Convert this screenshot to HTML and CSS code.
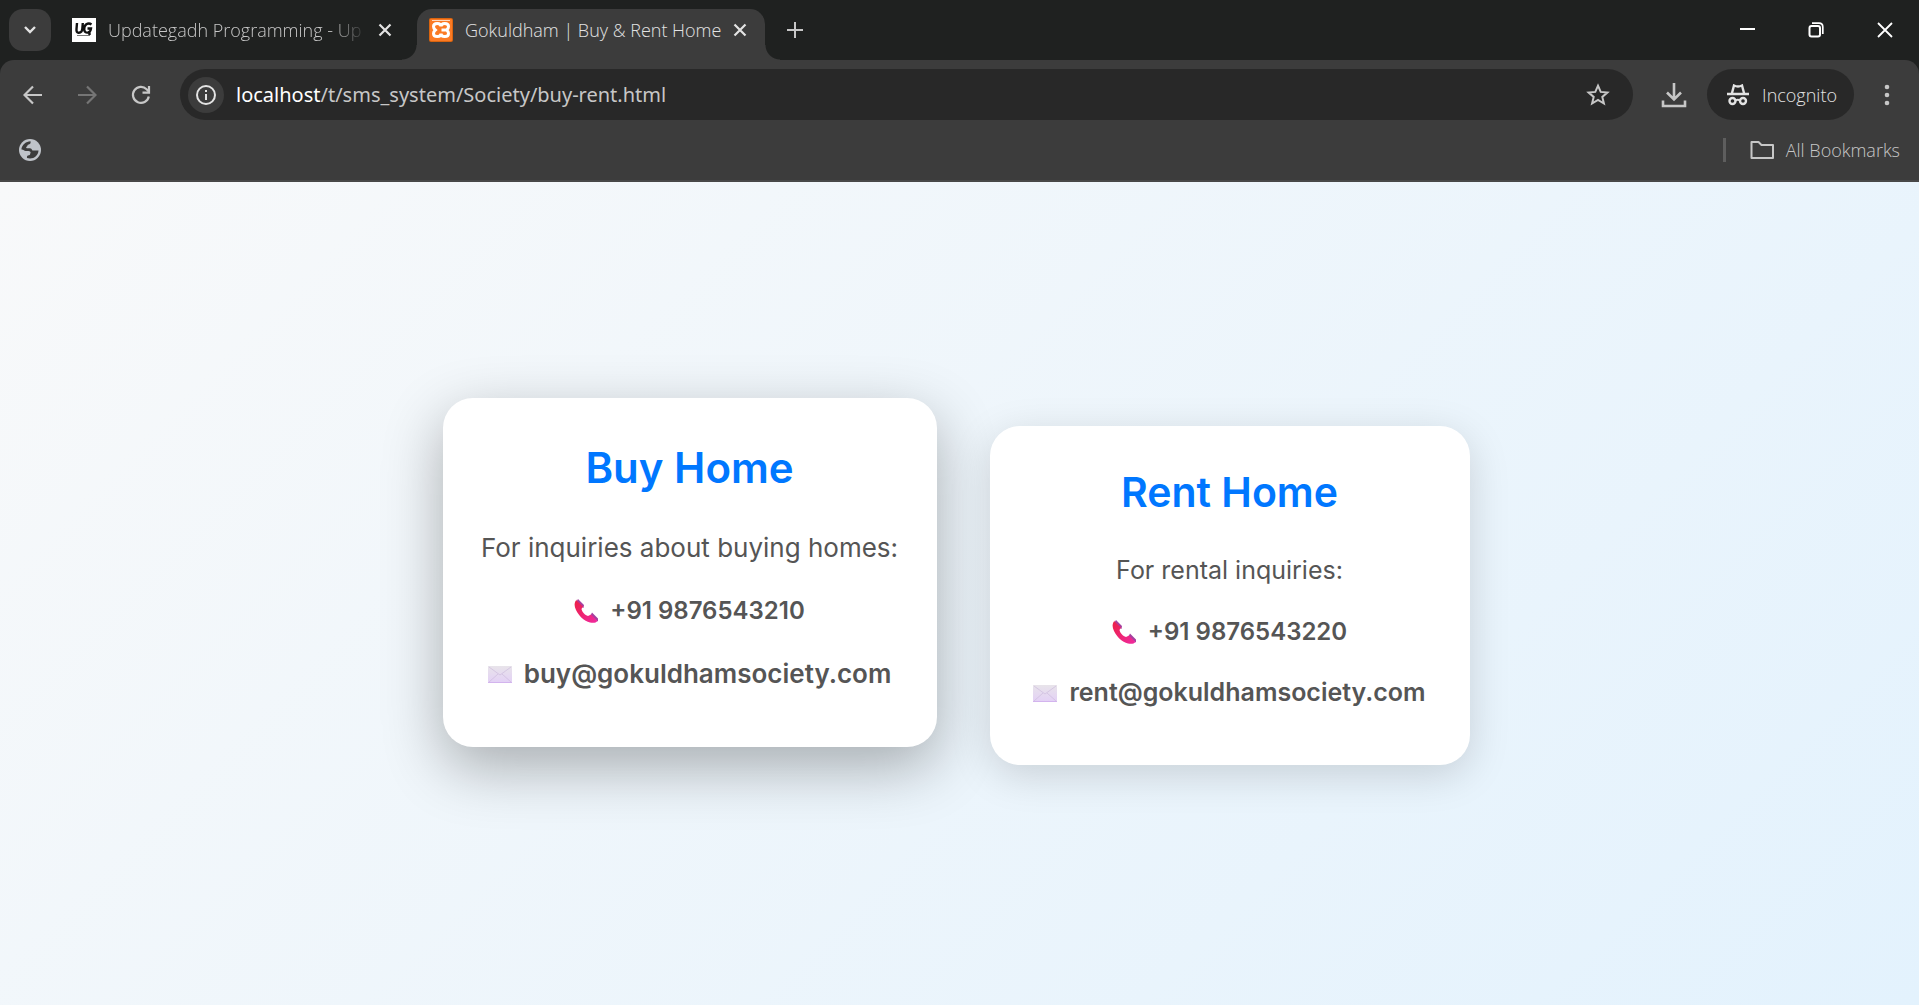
FILE: index.html
```html
<!DOCTYPE html>
<html lang="en">
<head>
<meta charset="utf-8">
<title>Gokuldham | Buy &amp; Rent Home</title>
<link rel="stylesheet" href="styles.css">
</head>
<body>
<header class="browser">
  <div class="tabstrip">
    <button class="tab-search" aria-label="Search tabs"><svg width="14" height="10" viewBox="0 0 14 10"><path d="M2 2l5 5 5-5" fill="none" stroke="currentColor" stroke-width="2.4"/></svg></button>
    <div class="tab">
      <svg class="favicon" width="24" height="24" viewBox="0 0 24 24"><path fill="#fff" d="M0 0h24v24H0z"/><path d="M5 5L4.500 11q-.4 4 2.400 3.700Q10 14.500 10.300 11L10.800 5M19.500 6.500Q17 4.700 14.300 6.300 12 8 12.200 11.500q.5 3.800 4 3 2.500-.7 2.800-4h-3.500M17.500 14.500v2.500" fill="none" stroke="#111" stroke-width="2.400"/><path d="M5 17.500h13" stroke="#777"/></svg>
      <span class="tab-title tab-title-faded">Updategadh Programming - Up</span>
      <button class="icon-button" aria-label="Close tab"><svg width="14" height="14" viewBox="0 0 14 14"><path d="M1.500 1.500l11 11M12.500 1.500l-11 11" stroke="currentColor" stroke-width="2.200"/></svg></button>
    </div>
    <div class="tab tab-active">
      <svg class="favicon" width="24" height="24" viewBox="0 0 24 24"><rect width="24" height="24" rx="2" fill="#d9640f"/><rect x="1" y="1" width="22" height="22" rx="1" fill="#fb7a24"/><path d="M3 2.500h18" stroke="#ffd9bd"/><path d="M12 8.500C12 4.500 4.500 4.500 4.500 8.500c0 2 1 2.500 2 3.500-1 1-2 1.500-2 3.500 0 4 7.500 4 7.500 0 0 4 7.500 4 7.500 0 0-2-1-2.500-2-3.500 1-1 2-1.500 2-3.500 0-4-7.500-4-7.500 0zM12.500 12H17" fill="none" stroke="#fff" stroke-width="3"/></svg>
      <span class="tab-title">Gokuldham | Buy &amp; Rent Home</span>
      <button class="icon-button" aria-label="Close tab"><svg width="14" height="14" viewBox="0 0 14 14"><path d="M1.500 1.500l11 11M12.500 1.500l-11 11" stroke="currentColor" stroke-width="2.200"/></svg></button>
    </div>
    <button class="icon-button new-tab" aria-label="New tab"><svg width="16" height="16" viewBox="0 0 16 16"><path d="M8 0v16M0 8h16" stroke="currentColor" stroke-width="2"/></svg></button>
    <div class="window-controls">
      <button class="icon-button" aria-label="Minimize"><svg width="16" height="16" viewBox="0 0 16 16"><path d="M1 7h15" stroke="currentColor" stroke-width="2"/></svg></button>
      <button class="icon-button" aria-label="Restore"><svg width="16" height="16" viewBox="0 0 16 16"><rect x="1.500" y="4" width="10.500" height="10.500" rx="2" fill="none" stroke="currentColor" stroke-width="2"/><path d="M4 1.200h7q3.800 0 3.800 3.800v7" fill="none" stroke="currentColor" stroke-width="1.700"/></svg></button>
      <button class="icon-button" aria-label="Close"><svg width="16" height="16" viewBox="0 0 16 16"><path d="M1 1l14 14M15 1L1 15" stroke="currentColor" stroke-width="1.800"/></svg></button>
    </div>
  </div>
  <div class="toolbar">
    <nav class="nav-buttons" aria-label="History">
      <button class="icon-button" aria-label="Back"><svg width="20" height="20" viewBox="0 0 20 20"><path d="M19 10H2M10 1.500L1.500 10l8.500 8.500" fill="none" stroke="currentColor" stroke-width="2.200"/></svg></button>
      <button class="icon-button" aria-label="Forward" disabled><svg width="20" height="20" viewBox="0 0 20 20"><path d="M1 10h17M10 1.500l8.500 8.500-8.500 8.500" fill="none" stroke="currentColor" stroke-width="2.200"/></svg></button>
      <button class="icon-button" aria-label="Reload"><svg width="20" height="20" viewBox="0 0 20 20"><path d="M17.800 11.500A8 8 0 1 1 15.600 4.200L18 6.600" fill="none" stroke="currentColor" stroke-width="2.200"/><path d="M18 1v6.700h-6.500" fill="none" stroke="currentColor" stroke-width="2.200"/></svg></button>
    </nav>
    <div class="omnibox">
      <button class="site-info" aria-label="Site information"><svg width="20" height="20" viewBox="0 0 20 20"><circle cx="10" cy="10" r="9" fill="none" stroke="currentColor" stroke-width="2"/><path d="M10 9v6M10 5v2" stroke="currentColor" stroke-width="2"/></svg></button>
      <p class="url"><span class="url-host">localhost</span>/t/sms_system/Society/buy-rent.html</p>
      <button class="icon-button" aria-label="Bookmark this page"><svg width="24" height="24" viewBox="0 0 24 24"><path d="M12 2.700l2.700 6.200 6.700.6-5.100 4.400 1.600 6.600-5.900-3.500-5.900 3.500 1.600-6.600-5.100-4.400 6.700-.6z" fill="none" stroke="currentColor" stroke-width="2"/></svg></button>
    </div>
    <button class="icon-button" aria-label="Downloads"><svg width="26" height="26" viewBox="0 0 26 26"><path d="M13 1v16M6 10.500l7 7 7-7M2 18.500V24h22v-5.500" fill="none" stroke="currentColor" stroke-width="2.600"/></svg></button>
    <button class="incognito"><svg width="22" height="22" viewBox="0 0 22 22"><path d="M0 10h22M5 9L7 1.500q4 2 8 0L17 9" fill="none" stroke="currentColor" stroke-width="2.400"/><circle cx="5.500" cy="17" r="3" fill="none" stroke="currentColor" stroke-width="2.400"/><circle cx="16" cy="17" r="3" fill="none" stroke="currentColor" stroke-width="2.400"/><path d="M8.500 16.500q2.300-1.500 4.500 0" fill="none" stroke="currentColor" stroke-width="1.800"/></svg>Incognito</button>
    <button class="icon-button menu" aria-label="Menu"><svg width="6" height="22" viewBox="0 0 6 22"><g fill="currentColor"><circle cx="3" cy="3" r="2.300"/><circle cx="3" cy="11" r="2.300"/><circle cx="3" cy="19" r="2.300"/></g></svg></button>
  </div>
  <div class="bookmarks">
    <button class="icon-button" aria-label="Bookmark"><svg width="22" height="22" viewBox="0 0 22 22"><circle cx="11" cy="11" r="11" fill="#bfc3c9"/><path d="M2.500 9.500C3.500 5.500 7 2.500 11.500 2.300c.5 1.700-.3 3-1.700 3.200-1.800.2-1 1.700-2.300 2.300-.7.400-.5 1.400.5 1.500 2 .1 4.500-.3 5 1.500.4 1.200 2 .7 3.500.7h3c-.2 4.500-4 8-8.500 8-1 0-2-.2-3-.5-.3-1.500.3-2.500 2-2.700 1.500-.1.800-1.500 1.500-2.300.6-.8-.6-2-2-2h-3c-1.500 0-1.500-1.500-4-1.500z" fill="#3c3c3c"/></svg></button>
    <button class="all-bookmarks"><svg width="24" height="20" viewBox="0 0 24 20"><path d="M1.500 2h7l3 3H23v13H1.500z" fill="none" stroke="currentColor" stroke-width="2" stroke-linejoin="round"/></svg>All Bookmarks</button>
  </div>
</header>

<svg class="defs" width="0" height="0" aria-hidden="true">
  <defs>
    <linearGradient id="receiver" x1="0" y1="0" x2="1" y2="1"><stop offset="0" stop-color="#ec1f45"/><stop offset="1" stop-color="#f02aa0"/></linearGradient>
    <linearGradient id="paper" x1="0" y1="0" x2="0" y2="1"><stop offset="0" stop-color="#e8e4ea"/><stop offset="1" stop-color="#e3d0f6"/></linearGradient>
    <symbol id="phone" viewBox="0 0 24 24"><path d="M4 0l6 6-.5 3-4-2-4-3zM18 13.500l6 6v3l-8-5z" fill="#a63f9f"/><path d="M3 .5C0 3 0 7 2 11c3 6 8 11 14 12.500 3 .7 6 .5 7.500-1.500L17 15.500l-3 1.500C11 16 8 13 7.500 10L9 7.500 2.500 1.500z" fill="url(#receiver)"/></symbol>
    <symbol id="mail" viewBox="0 0 24 24"><path d="M0 4h24v17H0z" fill="url(#paper)"/><path d="M0 20.500h24" stroke="#d3b4ee"/><path d="M1 5l11 8L23 5M1 20l9-8M23 20l-9-8" fill="none" stroke="#cdbbdc" stroke-width=".7"/></symbol>
  </defs>
</svg>

<main class="page">
  <section class="card card-raised">
    <h2>Buy Home</h2>
    <p>For inquiries about buying homes:</p>
    <p class="contact"><svg><use href="#phone"/></svg><strong class="number">+91 9876543210</strong></p>
    <p class="contact"><svg><use href="#mail"/></svg><strong>buy@gokuldhamsociety.com</strong></p>
  </section>
  <section class="card">
    <h2>Rent Home</h2>
    <p>For rental inquiries:</p>
    <p class="contact"><svg><use href="#phone"/></svg><strong class="number">+91 9876543220</strong></p>
    <p class="contact"><svg><use href="#mail"/></svg><strong>rent@gokuldhamsociety.com</strong></p>
  </section>
</main>
</body>
</html>
```

FILE: styles.css
```css
* { box-sizing: border-box; }

body {
  margin: 0;
  min-height: 100vh;
  display: flex;
  flex-direction: column;
  font-family: Inter, "Open Sans", sans-serif;
}

p, h2 { margin: 0; }

button {
  border: 0;
  padding: 0;
  background: none;
  color: inherit;
  font: inherit;
}

svg { display: block; flex: none; }
.defs { position: absolute; }

/* Browser window */
.browser {
  background: #1f2120;
  color: #c7c7c7;
  font-family: "Open Sans", "Noto Sans", sans-serif;
  font-size: 18px;
  font-weight: 300;
}

.tabstrip {
  display: flex;
  align-items: flex-end;
  height: 60px;
  padding-left: 9px;
}

.tab-search {
  display: grid;
  place-items: center;
  width: 42px;
  height: 42px;
  margin-bottom: 9px;
  border-radius: 14px;
  background: #3c3c3c;
  color: #e3e3e3;
}

.tab {
  display: flex;
  align-items: center;
  width: 366px;
  height: 51px;
  padding: 0 22px 9px 21px;
}

.tab-active {
  position: relative;
  width: 348px;
  padding: 0 15px 9px 12px;
  border-radius: 15px 15px 0 0;
  background: #3c3c3c;
  color: #e3e3e3;
}

/* Flared feet of the active tab */
.tab-active::before,
.tab-active::after {
  content: "";
  position: absolute;
  bottom: 0;
  width: 15px;
  height: 15px;
}
.tab-active::before { right: 100%; background: radial-gradient(circle at 0 0, transparent 14px, #3c3c3c 15px); }
.tab-active::after { left: 100%; background: radial-gradient(circle at 100% 0, transparent 14px, #3c3c3c 15px); }

.tab-title {
  flex: 1;
  margin: 0 8px 0 12px;
  white-space: nowrap;
}
.tab-title-faded {
  -webkit-mask-image: linear-gradient(to left, transparent, #000 36px);
  mask-image: linear-gradient(to left, transparent, #000 36px);
}

.icon-button { display: grid; place-items: center; }
.icon-button:disabled { color: #757575; }
.tab .icon-button { width: 20px; color: #e3e3e3; }

.new-tab { width: 60px; height: 60px; }

.window-controls {
  display: grid;
  grid-template-columns: repeat(3, 69px);
  height: 60px;
  margin-left: auto;
  color: #fff;
}

.toolbar {
  display: flex;
  align-items: center;
  padding: 9px 0 0 23px;
  border-radius: 14px 14px 0 0;
  background: #3c3c3c;
}

.nav-buttons { display: flex; gap: 34px; margin-right: 29px; }

.omnibox {
  flex: 1;
  display: flex;
  align-items: center;
  height: 51px;
  margin-right: 28px;
  padding: 0 23px 0 8px;
  border-radius: 26px;
  background: #282828;
}

.site-info {
  display: grid;
  place-items: center;
  width: 36px;
  height: 36px;
  border-radius: 50%;
  background: #3c3c3c;
  color: #e3e3e3;
}

.url {
  flex: 1;
  margin-left: 12px;
  font-family: "Noto Sans", sans-serif;
  font-size: 20px;
  font-weight: 400;
}
.url-host { color: #fff; }

.incognito {
  display: flex;
  align-items: center;
  gap: 13px;
  height: 51px;
  margin-left: 20px;
  padding: 0 17px 0 20px;
  border-radius: 26px;
  background: #282828;
  color: #e3e3e3;
}

.menu { width: 65px; }

.bookmarks {
  display: flex;
  align-items: center;
  justify-content: space-between;
  height: 62px;
  padding: 0 19px;
  border-bottom: 2px solid #484848;
  background: #3c3c3c;
}

.all-bookmarks {
  display: flex;
  align-items: center;
  gap: 12px;
  height: 24px;
  padding-left: 24px;
  border-left: 3px solid #5e5e5e;
}

/* Page */
.page {
  flex: 1;
  display: flex;
  align-items: center;
  justify-content: center;
  gap: 60px;
  padding: 4px 0 0;
  background: linear-gradient(135deg, #f8f9fa, #e3f2fd);
}

.card {
  width: 480px;
  padding: 33px 0 52px;
  border-radius: 30px;
  background: #fff;
  box-shadow: 0 10px 40px rgba(0, 0, 0, .15);
  color: #555;
  font-size: 25px;
  line-height: 41px;
  text-align: center;
}

.card h2 {
  margin-bottom: 25px;
  color: #0077ff;
  font-size: 41px;
  font-weight: 600;
  line-height: 66px;
}

.card p + p { margin-top: 20px; }

.contact {
  display: flex;
  align-items: center;
  justify-content: center;
  gap: 12px;
}
.contact svg { width: 24px; height: 24px; }
.contact strong { font-weight: 600; }
.contact .number { font-size: 24px; }

.card-raised {
  width: 494px;
  margin: 0 -7px 46px;
  padding-top: 36px;
  box-shadow: 0 20px 60px rgba(0, 0, 0, .3);
  font-size: 26px;
  line-height: 42px;
}
.card-raised h2 { font-size: 42px; line-height: 68px; }
.card-raised p + p { margin-top: 21px; }
```
